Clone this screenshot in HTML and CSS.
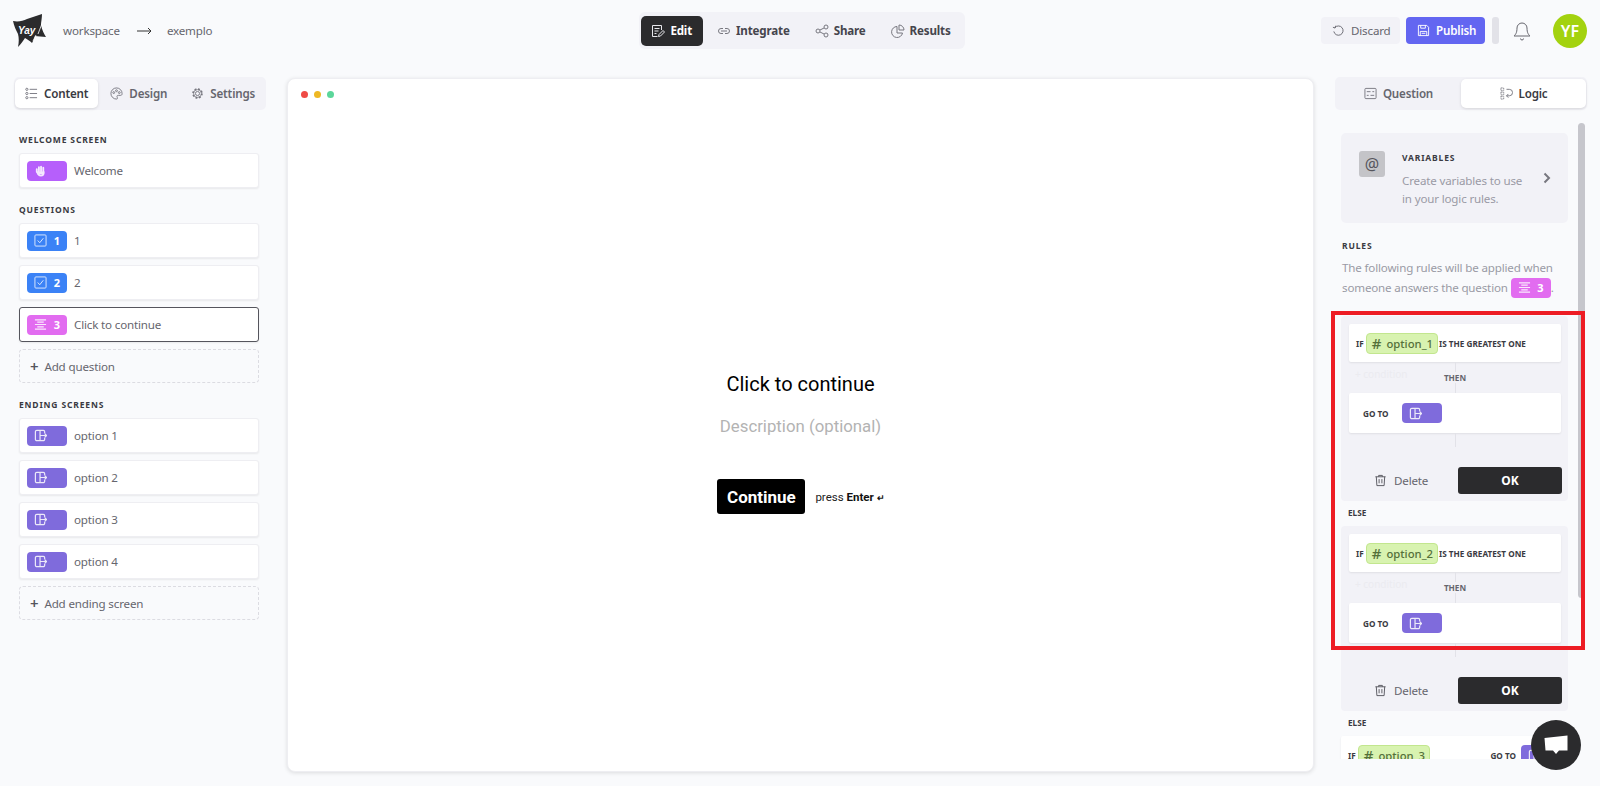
FILE: index.html
```html
<!DOCTYPE html>
<html lang="en">
<head>
    <meta charset="UTF-8">
    <title>Yay! Forms editor</title>
    <link rel="stylesheet" href="styles.css">
</head>
<body>
    <svg class="defs" width="0" height="0">
        <symbol id="i-check" viewBox="0 0 14 14"><rect x="1" y="1" width="12" height="12" rx="1" fill="none" stroke="currentColor"/><path d="M4 7l2.200 2.400L10 4.600" fill="none" stroke="currentColor"/></symbol>
        <symbol id="i-lines" viewBox="0 0 14 14"><path d="M1 2h12M3.500 4.500h7M1 7h12M3.500 9.500h7M1 12h12" fill="none" stroke="currentColor" stroke-width="1.200"/></symbol>
        <symbol id="i-exit" viewBox="0 0 14 14"><path d="M6.500 1.500H3A1.500 1.500 0 0 0 1.500 3v8A1.500 1.500 0 0 0 3 12.500h3.500zM6.500 1.500H10A1.500 1.500 0 0 1 11.500 3v1.500M11.500 9.500V11a1.500 1.500 0 0 1-1.500 1.500H6.500M6.500 7h7M11.500 5l2 2-2 2" fill="none" stroke="currentColor" stroke-width="1.300"/></symbol>
        <symbol id="i-trash" viewBox="0 0 14 14"><path d="M1.500 3h11M5 3V1.500h4V3M2.500 3l.6 9.500h7.800l.6-9.500M5.500 5.500v4.500M8.500 5.500v4.500" fill="none" stroke="currentColor"/></symbol>
    </svg>

    <div class="app">
        <!-- top bar -->
        <header class="topbar">
            <div class="crumbs">
                <svg class="logo" viewBox="0 0 34 34">
                    <path d="M0 7C5 8 10 7 14 5 19 3 24 2 29 0 29 4 28 8 28 11 29 16 31 20 33 23 29 23 25 22 22 22 21 25 20 27 19 29 17 27 14 25 12 24 10 27 8 30 5 33 6 28 6 24 5 20 3 16 1 12 0 7z" fill="#2b2b2d"/>
                    <text x="5" y="20" class="logo-text">Yay</text>
                    <path d="M25 20L30 7M20 27l3-6" stroke="#fff" stroke-width=".8"/>
                </svg>
                <span>workspace</span>
                <svg class="crumb-arrow" viewBox="0 0 15 8"><path d="M0 4h14M11 1l3 3-3 3" fill="none" stroke="#333"/></svg>
                <span>exemplo</span>
            </div>

            <nav class="mainnav">
                <a class="active">
                    <svg viewBox="0 0 14 14"><path d="M10.500 6V1.500h-9v11h5M3.500 4.500h5M3.500 7h4M3.500 9.500h2M7.500 12.500l.5-2 4-4 1.500 1.500-4 4z" fill="none" stroke="currentColor"/></svg>
                    Edit
                </a>
                <a>
                    <svg viewBox="0 0 14 14"><path d="M6 4.500H4a2.500 2.500 0 0 0 0 5h2M8 4.500h2a2.500 2.500 0 0 1 0 5H8M4 7h6" fill="none" stroke="currentColor"/></svg>
                    Integrate
                </a>
                <a>
                    <svg viewBox="0 0 14 14"><circle cx="3" cy="7" r="2" fill="none" stroke="currentColor"/><circle cx="11" cy="3" r="2" fill="none" stroke="currentColor"/><circle cx="11" cy="11" r="2" fill="none" stroke="currentColor"/><path d="M5 6l4-2M5 8l4 2" stroke="currentColor"/></svg>
                    Share
                </a>
                <a>
                    <svg viewBox="0 0 14 14"><path d="M6 2.500a5.500 5.500 0 1 0 5.500 6.500H6zM8 1a5 5 0 0 1 5 5H8z" fill="none" stroke="currentColor"/></svg>
                    Results
                </a>
            </nav>

            <div class="actions">
                <button class="btn-discard">
                    <svg viewBox="0 0 14 14"><path d="M3 4a5 5 0 1 1-1 4M1 3.500l2.300.8.600-2.400" fill="none" stroke="currentColor"/></svg>
                    Discard
                </button>
                <button class="btn-publish">
                    <svg viewBox="0 0 14 14"><path d="M1.500 1.500h9l2 2v9h-11zM4 1.500v3h5v-3M3.500 12.500V8h7v4.500M5 10h4" fill="none" stroke="currentColor"/></svg>
                    Publish
                </button>
                <span class="act-sep"></span>
                <svg class="bell" viewBox="0 0 18 20"><path d="M9 2a5 5 0 0 0-5 5c0 5-1.500 6.500-3 8h16c-1.500-1.500-3-3-3-8a5 5 0 0 0-5-5zM7.500 17.500a1.500 1.500 0 0 0 3 0" fill="none" stroke="#66666e"/></svg>
                <span class="avatar">YF</span>
            </div>
        </header>

        <main class="workspace">
            <!-- left column -->
            <aside class="left">
                <div class="tabs">
                    <a class="tab active first-tab">
                        <svg viewBox="0 0 14 14"><path d="M5 2.500h8M5 7h8M5 11.500h8" stroke="currentColor"/><circle cx="2" cy="2.500" r="1.200" fill="none" stroke="currentColor"/><circle cx="2" cy="7" r="1.200" fill="none" stroke="currentColor"/><circle cx="2" cy="11.500" r="1.200" fill="none" stroke="currentColor"/></svg>
                        Content
                    </a>
                    <a class="tab">
                        <svg viewBox="0 0 14 14"><path d="M7 1a6 6 0 1 0 0 12c1.500 0 1-1.500.6-2.500C7.200 9.500 8 9 9 9h2.500C13 9 13 7.500 13 7a6 6 0 0 0-6-6z" fill="none" stroke="currentColor"/><circle cx="4" cy="6" r="1" fill="none" stroke="currentColor"/><circle cx="7" cy="4" r="1" fill="none" stroke="currentColor"/><circle cx="10" cy="6" r="1" fill="none" stroke="currentColor"/></svg>
                        Design
                    </a>
                    <a class="tab">
                        <svg viewBox="0 0 14 14"><circle cx="7" cy="7" r="2.200" fill="none" stroke="currentColor"/><circle cx="7" cy="7" r="4.800" fill="none" stroke="currentColor" stroke-width="1.800" stroke-dasharray="2 1.770"/><circle cx="7" cy="7" r="4.200" fill="none" stroke="currentColor" stroke-width=".8"/></svg>
                        Settings
                    </a>
                </div>

                <section class="group first">
                    <h4>WELCOME SCREEN</h4>
                    <div class="item">
                        <span class="badge purple">
                            <svg class="ic" viewBox="0 0 14 14"><path d="M3 5.500v3M5.300 3.500V8M7.600 3V8M10 4v4.500M3.500 8.500c.7 2.500 2 4 4 4s3-1.500 3-4" fill="none" stroke="currentColor" stroke-width="2" stroke-linecap="round"/><path d="M4 8h6v3H5z" fill="currentColor"/></svg>
                        </span>
                        Welcome
                    </div>
                </section>

                <section class="group">
                    <h4>QUESTIONS</h4>
                    <div class="item"><span class="badge blue"><svg class="ic"><use href="#i-check"/></svg><b>1</b></span>1</div>
                    <div class="item"><span class="badge blue"><svg class="ic"><use href="#i-check"/></svg><b>2</b></span>2</div>
                    <div class="item selected"><span class="badge pink"><svg class="ic"><use href="#i-lines"/></svg><b>3</b></span>Click to continue</div>
                    <div class="add"><span class="plus">+</span>Add question</div>
                </section>

                <section class="group">
                    <h4>ENDING SCREENS</h4>
                    <div class="item"><span class="badge violet"><svg class="ic"><use href="#i-exit"/></svg></span>option 1</div>
                    <div class="item"><span class="badge violet"><svg class="ic"><use href="#i-exit"/></svg></span>option 2</div>
                    <div class="item"><span class="badge violet"><svg class="ic"><use href="#i-exit"/></svg></span>option 3</div>
                    <div class="item"><span class="badge violet"><svg class="ic"><use href="#i-exit"/></svg></span>option 4</div>
                    <div class="add"><span class="plus">+</span>Add ending screen</div>
                </section>
            </aside>

            <!-- preview -->
            <section class="preview">
                <div class="dots"><i class="red"></i><i class="yellow"></i><i class="green"></i></div>
                <div class="slide">
                    <h2>Click to continue</h2>
                    <p class="desc">Description (optional)</p>
                    <div class="cta">
                        <button class="continue">Continue</button>
                        <span class="hint">press <b>Enter <small>↵</small></b></span>
                    </div>
                </div>
            </section>

            <!-- right column -->
            <aside class="right">
                <div class="tabs">
                    <a class="tab wide">
                        <svg viewBox="0 0 14 14"><rect x="1" y="1.500" width="12" height="11" rx="1" fill="none" stroke="currentColor"/><path d="M3 5h4M9 5h2M3 9h2M7 9h4" stroke="currentColor"/></svg>
                        Question
                    </a>
                    <a class="tab wide active">
                        <svg viewBox="0 0 14 14"><path d="M1 1h3v3H1zM1 5.500h3v3H1zM1 10h3v3H1z" fill="none" stroke="currentColor" stroke-dasharray="1 .6"/><path d="M7 2.500h3a3 3 0 0 1 0 7H7M9 7.500l-2 2 2 2" fill="none" stroke="currentColor"/></svg>
                        Logic
                    </a>
                </div>

                <div class="scroller">
                    <div class="var-card">
                        <span class="var-icon">@</span>
                        <div class="var-text">
                            <h4>VARIABLES</h4>
                            <p>Create variables to use in your logic rules.</p>
                        </div>
                        <svg class="chev" viewBox="0 0 8 12"><path d="M1.500 1.500L6 6l-4.500 4.500" fill="none" stroke="#77777f" stroke-width="2"/></svg>
                    </div>

                    <h4 class="rules-title">RULES</h4>
                    <p class="rules-text">The following rules will be applied when someone answers the question <span class="badge pink inline"><svg class="ic"><use href="#i-lines"/></svg><b>3</b></span>.</p>

                    <div class="rule">
                        <div class="rule-row if">
                            <span class="kw">IF</span>
                            <span class="tag"><em>#</em>option_1</span>
                            <span class="kw">IS THE GREATEST ONE</span>
                        </div>
                        <div class="link">
                            <span class="cond">+ condition</span>
                            <span class="then">THEN</span>
                        </div>
                        <div class="rule-row goto">
                            <span class="kw">GO TO</span>
                            <span class="badge violet"><svg class="ic"><use href="#i-exit"/></svg></span>
                        </div>
                        <div class="stub"></div>
                        <div class="rule-foot">
                            <span class="del"><svg viewBox="0 0 14 14"><use href="#i-trash"/></svg>Delete</span>
                            <button class="ok">OK</button>
                        </div>
                    </div>

                    <h5 class="else">ELSE</h5>

                    <div class="rule">
                        <div class="rule-row if">
                            <span class="kw">IF</span>
                            <span class="tag"><em>#</em>option_2</span>
                            <span class="kw">IS THE GREATEST ONE</span>
                        </div>
                        <div class="link">
                            <span class="cond">+ condition</span>
                            <span class="then">THEN</span>
                        </div>
                        <div class="rule-row goto">
                            <span class="kw">GO TO</span>
                            <span class="badge violet"><svg class="ic"><use href="#i-exit"/></svg></span>
                        </div>
                        <div class="stub"></div>
                        <div class="rule-foot">
                            <span class="del"><svg viewBox="0 0 14 14"><use href="#i-trash"/></svg>Delete</span>
                            <button class="ok">OK</button>
                        </div>
                    </div>

                    <h5 class="else">ELSE</h5>

                    <div class="rule-row collapsed">
                        <span class="kw">IF</span>
                        <span class="tag"><em>#</em>option_3</span>
                        <span class="kw push">GO TO</span>
                        <span class="badge violet"><svg class="ic"><use href="#i-exit"/></svg></span>
                    </div>
                </div>
                <div class="thumb"></div>
            </aside>
        </main>

        <!-- annotation on the screenshot -->
        <div class="highlight"></div>

        <button class="chat">
            <svg viewBox="0 0 26 22"><path d="M1.500 4L24.500 1.500V16.500H16L13 20l-3-3.500H2.500z" fill="#fff"/></svg>
        </button>
    </div>
</body>
</html>
```

FILE: styles.css
```css
* { box-sizing: border-box; }
html, body { margin: 0; height: 100%; }
body {
    font-family: "Noto Sans", "Open Sans", Arial, sans-serif;
    background: #f9fafc;
    color: #55555d;
    overflow: hidden;
}
svg { display: block; flex: none; }
.defs { position: absolute; }
h4, h5, h2, p { margin: 0; }
button { font-family: inherit; border: none; cursor: pointer; }

/* the UI text is a touch taller but narrower than plain Noto Sans */
.crumbs, .mainnav a, .actions button, .tab, .item, .add, .del, .var-text p, .rules-text {
    font-size: 11.600px;
    letter-spacing: -0.170px;
}

.app {
    position: relative;
    display: flex;
    flex-direction: column;
    width: 1600px;
    height: 786px;
}

/* top bar */
.topbar {
    display: grid;
    grid-template-columns: 1fr auto 1fr;
    align-items: center;
    height: 61px;
    padding: 0 13px;
    flex: none;
}
.crumbs {
    display: flex;
    align-items: center;
    color: #66666e;
}
.logo { width: 34px; height: 34px; margin-right: 16px; }
.logo-text {
    font-family: "Liberation Sans", sans-serif;
    font-style: italic;
    font-weight: 700;
    font-size: 10px;
    letter-spacing: 0;
    fill: #fff;
}
.crumb-arrow { width: 15px; height: 8px; margin: 0 15px 0 17px; }

.mainnav {
    display: flex;
    align-items: center;
    height: 37px;
    margin-left: 4px;
    padding: 0 3px 0 2px;
    background: #f2f2f7;
    border-radius: 6px;
}
.mainnav a {
    display: flex;
    align-items: center;
    gap: 5px;
    height: 30px;
    padding: 0 11px 0 10px;
    margin-right: 4px;
    font-weight: 700;
    color: #45454d;
    border-radius: 5px;
}
.mainnav a:last-child { margin-right: 0; }
.mainnav a svg { width: 14px; height: 14px; color: #77777f; }
.mainnav a.active { background: #2b2b2d; color: #fff; }
.mainnav a.active svg { color: #e8e8ec; }

.actions {
    display: flex;
    align-items: center;
    justify-content: flex-end;
}
.actions button {
    display: flex;
    align-items: center;
    gap: 6px;
    height: 27px;
    padding: 0 11px;
    border-radius: 4px;
}
.actions button svg { width: 13px; height: 13px; }
.btn-discard { background: #f2f2f7; color: #66666e; width: 79px; }
.btn-publish {
    background: #6366f1;
    color: #fff;
    font-weight: 600;
    width: 79px;
    margin-left: 6px;
}
.act-sep {
    width: 7px;
    height: 27px;
    margin: 0 14px 0 7px;
    background: #e2e2e8;
    border-radius: 3px;
}
.bell { width: 18px; height: 20px; margin-right: 22px; }
.avatar {
    display: flex;
    align-items: center;
    justify-content: center;
    width: 34px;
    height: 34px;
    border-radius: 50%;
    background: #a3d20f;
    color: #fff;
    font-size: 16px;
    font-weight: 600;
}

/* main area */
.workspace {
    display: flex;
    flex: 1;
    min-height: 0;
    padding: 16px 13px 0 14px;
    gap: 21px;
}
.left { width: 252px; flex: none; }
.right { width: 252px; flex: none; position: relative; }

.tabs {
    display: flex;
    align-items: center;
    height: 33px;
    padding: 0 1px;
    background: #f2f2f7;
    border-radius: 5px;
}
.tab {
    display: flex;
    align-items: center;
    justify-content: center;
    gap: 6px;
    height: 29px;
    padding: 0 12px;
    font-weight: 600;
    color: #66666e;
    border-radius: 5px;
}
.tab.first-tab { padding: 0 10px; }
.tab svg { width: 13px; height: 13px; color: #77777f; }
.tab.active {
    background: #fff;
    color: #3a3a42;
    box-shadow: 0 1px 3px rgba(0,0,0,0.12);
}
.tab.wide { flex: 1; }
.tab.wide.active { flex: 0 0 125px; }

/* form items */
.group { padding: 0 7px 0 5px; margin-top: 15px; }
.group.first { margin-top: 23px; }
.group h4, .var-text h4, .rules-title {
    font-size: 8.500px;
    font-weight: 700;
    line-height: 14px;
    letter-spacing: 0.850px;
    color: #3a3a42;
}
.group h4 { margin-bottom: 6px; }
.item {
    display: flex;
    align-items: center;
    gap: 7px;
    height: 35px;
    margin-bottom: 7px;
    padding: 0 7px;
    color: #66666e;
    background: #fff;
    border: 1px solid #eeeef2;
    border-radius: 3px;
    box-shadow: 0 1px 2px rgba(0,0,0,0.07);
}
.item.selected { border-color: #55555d; }
.badge {
    display: inline-flex;
    align-items: center;
    justify-content: space-between;
    width: 40px;
    height: 20px;
    padding: 0 7px;
    color: #fff;
    border-radius: 4px;
    font-size: 11px;
    letter-spacing: 0;
    flex: none;
}
.badge b { font-weight: 700; }
.ic { width: 13px; height: 13px; opacity: 0.85; }
.purple { background: #b65ffb; }
.blue { background: #3b82f6; }
.pink { background: #e26cf0; }
.violet { background: #7f6bdc; }
.add {
    display: flex;
    align-items: center;
    height: 34px;
    padding: 0 10px;
    color: #66666e;
    border: 1px dashed #dcdce2;
    border-radius: 4px;
}
.plus { font-size: 15px; font-weight: 600; color: #55555d; margin-right: 6px; line-height: 1; }

/* preview */
.preview {
    flex: 1;
    height: 694px;
    margin-top: 1px;
    background: #fff;
    border: 1px solid #eeeef2;
    border-radius: 8px;
    box-shadow: 0 1px 4px rgba(0,0,0,0.12);
    position: relative;
    display: flex;
    flex-direction: column;
}
.dots { display: flex; gap: 6px; padding: 12px 0 0 13px; }
.dots i { width: 7px; height: 7px; border-radius: 50%; }
.dots .red { background: #ef4b45; }
.dots .yellow { background: #eeb824; }
.dots .green { background: #5bd69a; }
.slide {
    flex: 1;
    display: flex;
    flex-direction: column;
    align-items: center;
    padding-top: 274px;
    font-family: Roboto, Arial, sans-serif;
}
.slide h2 { font-size: 20px; font-weight: 400; line-height: 24px; color: #000; }
.desc { font-size: 16.800px; color: #b3b3b3; line-height: 22px; margin-top: 19px; }
.cta {
    display: flex;
    align-items: center;
    gap: 10px;
    margin-top: 42px;
    margin-left: 1px;
}
.continue {
    width: 88px;
    height: 35px;
    background: #000;
    color: #fff;
    font-family: Roboto, Arial, sans-serif;
    font-size: 17px;
    font-weight: 700;
    border-radius: 3px;
}
.hint { font-size: 11.500px; color: #222; }
.hint b { font-weight: 700; color: #111; }
.hint small { font-size: 9px; }

/* logic panel */
.scroller {
    height: 636px;
    margin-top: 13px;
    padding: 10px 19px 0 6px;
    overflow: hidden;
}
.thumb {
    position: absolute;
    left: 243px;
    top: 46px;
    width: 7px;
    height: 475px;
    background: #c6c6cc;
    border-radius: 4px;
}
.var-card {
    display: flex;
    height: 90px;
    padding: 18px 18px 0;
    background: #f2f2f7;
    border-radius: 5px;
    position: relative;
}
.var-icon {
    display: flex;
    align-items: center;
    justify-content: center;
    width: 26px;
    height: 26px;
    background: #c4c4c8;
    border-radius: 3px;
    font-size: 16px;
    color: #55555d;
}
.var-text { width: 130px; margin-left: 17px; }
.var-text h4 { margin-bottom: 7px; }
.var-text p { line-height: 17.500px; color: #9a9aa5; }
.chev { position: absolute; right: 17px; top: 39px; width: 8px; height: 12px; }
.rules-title { margin-top: 16px; padding-left: 1px; }
.rules-text {
    margin: 5px 0 18px 1px;
    line-height: 20px;
    color: #9a9aa5;
    height: 40px;
}
.badge.inline { vertical-align: middle; margin-top: -2px; }

.rule {
    padding: 8px 7px 7px 8px;
    background: #f2f2f7;
    border-radius: 4px;
}
.rule-row {
    display: flex;
    align-items: center;
    background: #fff;
    border-radius: 2px;
    box-shadow: 0 1px 2px rgba(0,0,0,0.08);
}
.rule-row.if { height: 38px; padding-left: 7px; }
.rule-row.goto { height: 40px; padding-left: 14px; gap: 14px; }
.kw { font-size: 8.200px; font-weight: 700; color: #3a3a42; white-space: nowrap; }
.rule-row.goto .kw { width: 25px; }
.tag {
    display: inline-flex;
    align-items: center;
    height: 21px;
    margin-left: 2px;
    margin-right: 1px;
    padding: 0 4px 0 5px;
    background: #d8f3b0;
    border: 1px solid #c2e68e;
    border-radius: 4px;
    font-size: 11.300px;
    font-weight: 500;
    color: #54703a;
}
.tag em { font-style: normal; font-size: 15px; margin-right: 5px; }
.link {
    position: relative;
    height: 31px;
    display: flex;
    align-items: center;
    justify-content: center;
}
.link::before {
    content: "";
    position: absolute;
    left: 50%;
    top: 0;
    bottom: 0;
    border-left: 1px solid #e2e2e8;
}
.cond { position: absolute; left: 6px; top: 5px; font-size: 10px; color: #ebebf0; }
.then {
    position: relative;
    padding: 0 2px;
    background: #f2f2f7;
    font-size: 8.200px;
    font-weight: 700;
    color: #66666e;
}
.stub { height: 14px; width: 1px; margin-left: 106px; background: #e2e2e8; }
.rule-foot {
    display: flex;
    align-items: center;
    margin-top: 20px;
}
.del {
    display: flex;
    align-items: center;
    gap: 7px;
    margin-left: 25px;
    color: #66666e;
}
.del svg { width: 13px; height: 13px; color: #55555d; }
.ok {
    width: 104px;
    height: 27px;
    margin-left: auto;
    margin-right: -1px;
    background: #2b2b2d;
    color: #fff;
    font-size: 12px;
    font-weight: 700;
    border-radius: 3px;
}
.else {
    font-size: 8.200px;
    font-weight: 700;
    line-height: 14px;
    margin: 5px 0 6px 7px;
    color: #3a3a42;
}
.rule-row.collapsed { height: 38px; padding: 0 7px; }
.collapsed .push { margin-left: auto; margin-right: 5px; }

/* red box drawn over the screenshot */
.highlight {
    position: absolute;
    left: 1331px;
    top: 311px;
    width: 254px;
    height: 339px;
    border: 4px solid #ed1c24;
    pointer-events: none;
}
.chat {
    position: absolute;
    left: 1531px;
    top: 720px;
    width: 50px;
    height: 50px;
    display: flex;
    align-items: center;
    justify-content: center;
    background: #2b2b2d;
    border-radius: 50%;
}
.chat svg { width: 26px; height: 22px; }
```
